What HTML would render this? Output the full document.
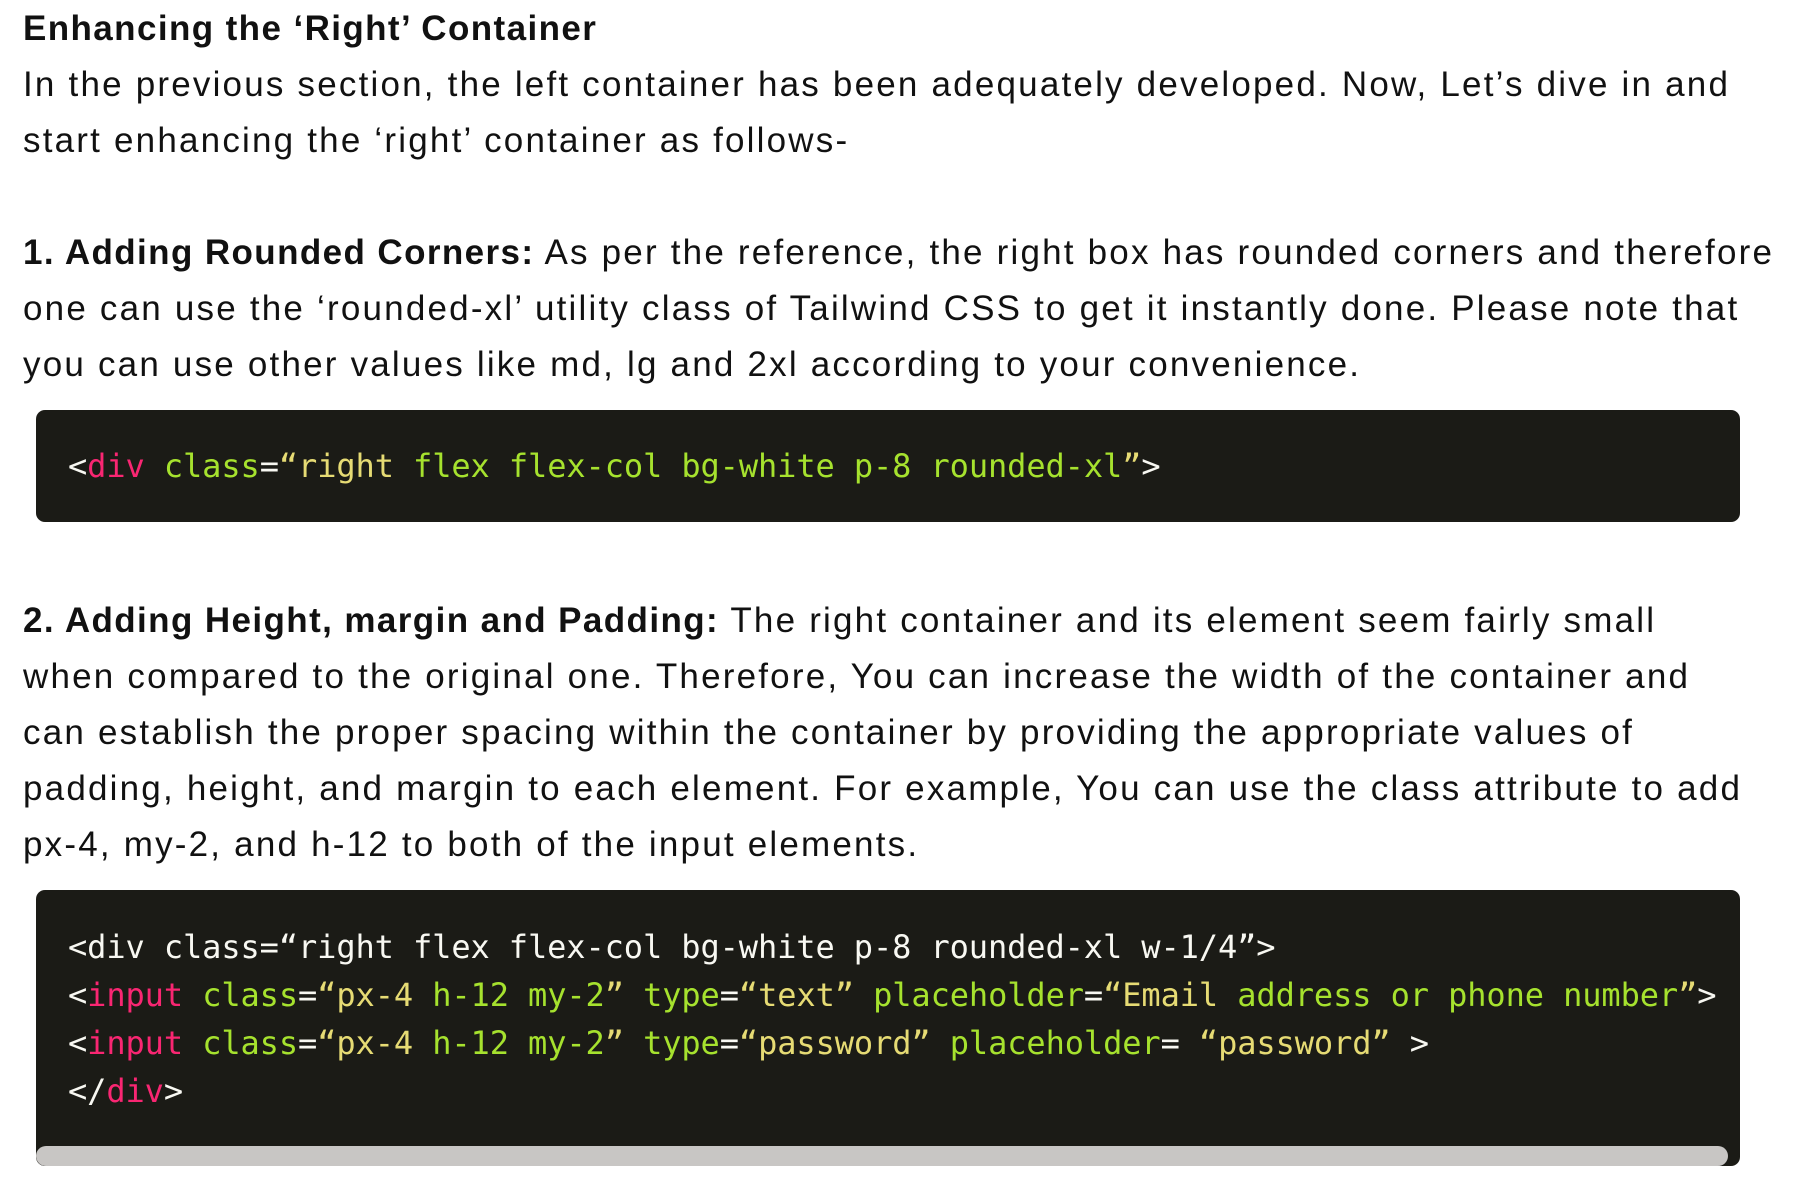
<!DOCTYPE html>
<html><head><meta charset="utf-8"><style>
body{margin:0;width:1796px;height:1204px;background:#fff;position:relative;overflow:hidden;font-family:"Liberation Sans",sans-serif;color:#111}
.l{position:absolute;left:23px;height:56px;line-height:56px;font-size:35px;white-space:nowrap;letter-spacing:2.2px}
b{font-weight:700;letter-spacing:1.4px}
.code{position:absolute;left:36px;width:1704px;background:#1b1b16;border-radius:9px;overflow:hidden}
.c{position:absolute;left:68px;height:48px;line-height:48px;font-family:"DejaVu Sans Mono","Liberation Mono",monospace;font-size:32px;white-space:nowrap;color:#f8f8f2;letter-spacing:-0.1px}
.p{color:#f92672}.g{color:#a6e22e}.y{color:#e6db74}
</style></head><body>
<div class="l" style="top:1px"><b>Enhancing the ‘Right’ Container</b></div>
<div class="l" style="top:57px">In the previous section, the left container has been adequately developed. Now, Let’s dive in and</div>
<div class="l" style="top:113px">start enhancing the ‘right’ container as follows-</div>
<div class="l" style="top:225px"><b>1. Adding Rounded Corners:</b> As per the reference, the right box has rounded corners and therefore</div>
<div class="l" style="top:281px">one can use the ‘rounded-xl’ utility class of Tailwind CSS to get it instantly done. Please note that</div>
<div class="l" style="top:337px">you can use other values like md, lg and 2xl according to your convenience.</div>
<div class="code" style="top:410px;height:112px"></div>
<div class="c" style="top:442px"><span>&lt;</span><span class="p">div</span> <span class="g">class</span>=<span class="y">“right</span> <span class="g">flex flex-col bg-white p-8 rounded-xl</span><span class="y">”</span>&gt;</div>
<div class="l" style="top:593px"><b>2. Adding Height, margin and Padding:</b> The right container and its element seem fairly small</div>
<div class="l" style="top:649px">when compared to the original one. Therefore, You can increase the width of the container and</div>
<div class="l" style="top:705px">can establish the proper spacing within the container by providing the appropriate values of</div>
<div class="l" style="top:761px">padding, height, and margin to each element. For example, You can use the class attribute to add</div>
<div class="l" style="top:817px">px-4, my-2, and h-12 to both of the input elements.</div>
<div class="code" style="top:890px;height:276px"><div style="position:absolute;left:0;right:12px;bottom:0;height:20px;background:#c8c6c4;border-radius:10px"></div></div>
<div class="c" style="top:923px">&lt;div class=“right flex flex-col bg-white p-8 rounded-xl w-1/4”&gt;</div>
<div class="c" style="top:971px">&lt;<span class="p">input</span> <span class="g">class</span>=<span class="y">“px-4</span> <span class="g">h-12 my-2</span><span class="y">”</span> <span class="g">type</span>=<span class="y">“text”</span> <span class="g">placeholder</span>=<span class="y">“Email</span> <span class="g">address or phone number</span><span class="y">”</span>&gt;</div>
<div class="c" style="top:1019px">&lt;<span class="p">input</span> <span class="g">class</span>=<span class="y">“px-4</span> <span class="g">h-12 my-2</span><span class="y">”</span> <span class="g">type</span>=<span class="y">“password”</span> <span class="g">placeholder</span>= <span class="y">“password”</span> &gt;</div>
<div class="c" style="top:1067px">&lt;/<span class="p">div</span>&gt;</div>
</body></html>
